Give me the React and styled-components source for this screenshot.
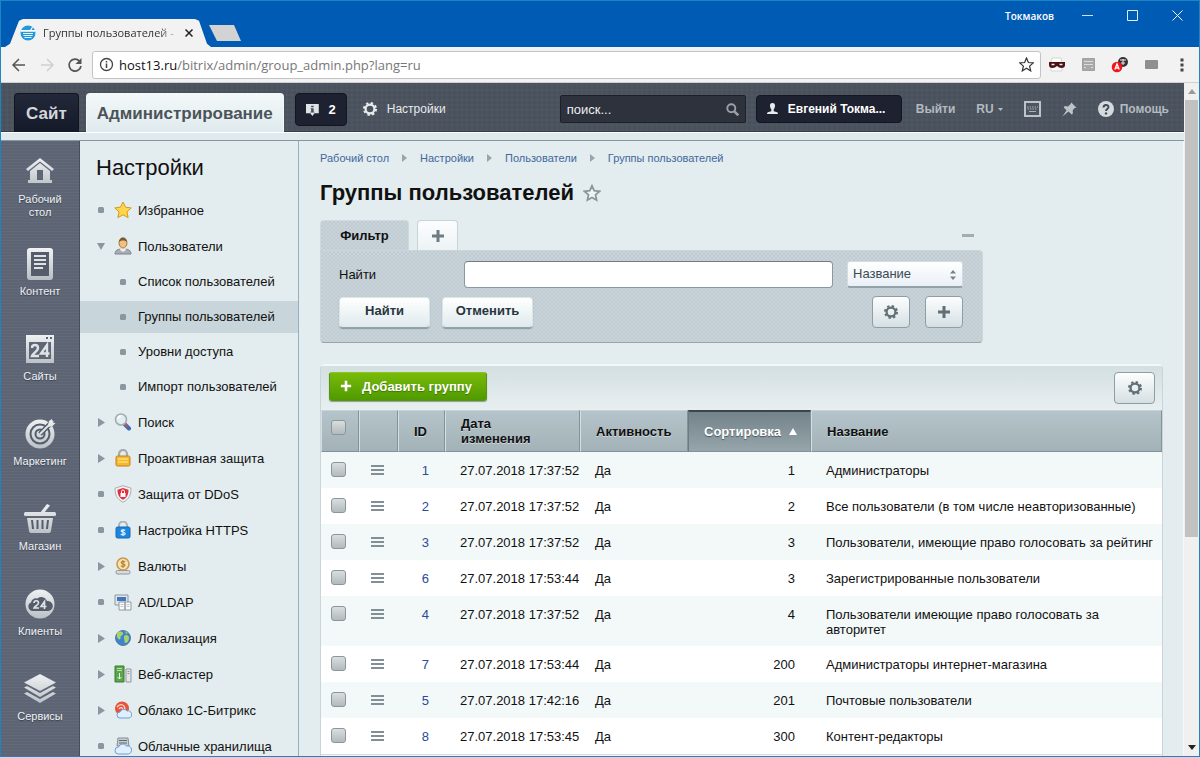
import React from "react";
import styled, { createGlobalStyle, css } from "styled-components";

const Global = createGlobalStyle`
  * { box-sizing: border-box; }
  html, body { margin: 0; height: 100%; }
  #root { height: 100%; }
  body { font-family: "Liberation Sans", Arial, sans-serif; font-size: 13px; color: #111; overflow: hidden; }
  button, input, select { font-family: inherit; }
  ul, ol { list-style: none; margin: 0; padding: 0; }
`;

/* ---------- browser window ---------- */

const Window = styled.div`
  height: 100vh;
  display: flex;
  flex-direction: column;
  border: 1px solid #1a87c4;
  overflow: hidden;
`;

const TitleBar = styled.header`
  flex: none;
  height: 46px;
  display: flex;
  background: #005bb5;
  color: #fff;
`;

const BrowserTab = styled.div`
  align-self: flex-end;
  width: 206px;
  height: 28px;
  margin-left: 4px;
  padding: 0 18px 0 15px;
  display: flex;
  align-items: center;
  background: #f2f2f2;
  clip-path: polygon(0 100%, 5px 88%, 14px 6%, 18px 0, 190px 0, 194px 6%, 202px 88%, 100% 100%);
`;

const TabTitle = styled.span`
  flex: 1;
  margin: 0 8px 0 7px;
  white-space: nowrap;
  font: 11px/16px "Open Sans", sans-serif;
  color: #333;
  mask-image: linear-gradient(90deg, #000 85%, rgba(0,0,0,.2));
`;

const BareButton = styled.button`
  flex: none;
  display: flex;
  align-items: center;
  justify-content: center;
  padding: 0;
  border: 0;
  background: none;
  color: inherit;
`;

const NewTab = styled.button`
  align-self: flex-end;
  width: 32px;
  height: 16px;
  margin: 0 0 6px -2px;
  padding: 0;
  border: 0;
  background: #d3d3d3;
  clip-path: polygon(0 0, 25px 0, 100% 100%, 8px 100%);
`;

const WindowControls = styled.div`
  margin-left: auto;
  height: 29px;
  padding-right: 16px;
  display: flex;
  align-items: center;
  gap: 28px;
  font: 600 10px/16px "Open Sans", sans-serif;
`;

const ControlButtons = styled.div`
  display: flex;
  gap: 34px;
`;

const AddressBar = styled.div`
  flex: none;
  height: 36px;
  display: flex;
  align-items: center;
  padding: 0 9px 0 10px;
  background: #f2f2f2;
  border-bottom: 1px solid #d0d0d0;
  color: #4a4a4a;
`;

const NavButtons = styled.div`
  display: flex;
  gap: 12px;
  margin-right: 9px;
`;

const UrlBox = styled.div`
  flex: 1;
  height: 28px;
  display: flex;
  align-items: center;
  gap: 5px;
  padding: 0 6px;
  border: 1px solid #c4c4c4;
  border-radius: 3px;
  background: #fff;
`;

const Url = styled.span`
  flex: 1;
  font: 13px/20px "Open Sans", sans-serif;
  color: #777;
  white-space: nowrap;
  b { font-weight: 400; color: #111; }
`;

const Extensions = styled.div`
  display: flex;
  align-items: center;
  gap: 16px;
  margin-left: 7px;
`;

const Viewport = styled.div`
  flex: 1;
  min-height: 0;
  display: flex;
`;

const ScrollBar = styled.div`
  flex: none;
  width: 15px;
  display: flex;
  flex-direction: column;
  align-items: center;
  background: #f0f0f0;
`;

const ScrollThumb = styled.div`
  width: 13px;
  flex: 0 0 65%;
  background: #c1c1c1;
`;

const ScrollArrow = styled(BareButton)`
  height: 17px;
  width: 15px;
  color: ${(p) => (p.$muted ? "#9a9a9a" : "#222")};
  margin-top: ${(p) => (p.$end ? "auto" : 0)};
`;

/* ---------- admin header ---------- */

const Admin = styled.div`
  flex: 1;
  min-width: 0;
  display: flex;
  flex-direction: column;
  background: #e3ecee;
`;

const TopBar = styled.nav`
  flex: none;
  height: 49px;
  display: flex;
  align-items: flex-start;
  padding: 10px 15px 0 13px;
  border-bottom: 1px solid #363d46;
  background:
    repeating-linear-gradient(90deg, rgba(255,255,255,.02) 0 2px, transparent 2px 5px),
    repeating-linear-gradient(0deg, rgba(255,255,255,.02) 0 2px, transparent 2px 5px),
    #48515c;
`;

const ModeTab = styled.a`
  height: 39px;
  padding: 0 11px;
  border-radius: 4px 4px 0 0;
  font-size: 17px;
  font-weight: 700;
  line-height: 40px;
  text-decoration: none;
  color: #d3d7db;
  background: linear-gradient(#23283a, #151a29);
  border: 1px solid #12151f;
  border-bottom: 0;
  margin-right: 7px;
  ${(p) => p.$active && css`
    padding: 0 10px;
    border-color: #f3f8f9;
    color: #4c545a;
    background: linear-gradient(#f3f8f9, #dfeaee);
  `}
`;

const DarkButton = styled.button`
  height: ${(p) => (p.$tall ? 33 : 28)}px;
  width: ${(p) => p.$w}px;
  display: flex;
  align-items: center;
  gap: 10px;
  padding: 0 10px;
  border: 1px solid #14161f;
  border-radius: 4px;
  background: #1e2130;
  color: #fff;
  font-size: ${(p) => (p.$tall ? 13 : 12)}px;
  font-weight: 700;
  white-space: nowrap;
`;

const TopLink = styled.a`
  height: 28px;
  display: flex;
  align-items: center;
  gap: ${(p) => p.$gap || 6}px;
  color: ${(p) => (p.$bright ? "#e8ebed" : "#b3bac0")};
  font-size: 12px;
  font-weight: ${(p) => (p.$bright ? 400 : 700)};
  text-decoration: none;
`;

const TopLeft = styled.div`
  display: flex;
  align-items: flex-start;
  gap: 16px;
  margin-left: 4px;
  ${TopLink} { margin-top: 2px; }
`;

const TopRight = styled.div`
  margin: 2px 0 0 auto;
  display: flex;
  align-items: center;
  gap: 10px;
`;

const TopLinks = styled.div`
  display: flex;
  gap: 21px;
  margin-left: 4px;
`;

const SearchBox = styled.label`
  width: 186px;
  height: 28px;
  display: flex;
  align-items: center;
  padding: 0 6px;
  border: 1px solid #1d2026;
  border-radius: 2px;
  background: #2d323c;
  color: #9ba0a6;
`;

const SearchInput = styled.input`
  flex: 1;
  min-width: 0;
  padding: 0;
  border: 0;
  background: none;
  font-size: 13px;
  color: #fff;
  &::placeholder { color: #eef0f2; opacity: 1; }
`;

const Strip = styled.div`
  flex: none;
  height: 9px;
  border-top: 1px solid #fff;
  border-bottom: 1px solid #8a959c;
  background: #dfeaee;
`;

const Body = styled.div`
  flex: 1;
  min-height: 0;
  display: flex;
`;

/* ---------- icon rail ---------- */

const Rail = styled.nav`
  flex: none;
  width: 79px;
  padding-top: 14px;
  overflow: hidden;
  border-right: 1px solid #474e5c;
  background: repeating-linear-gradient(#626979 0 1px, #5d6474 1px 3px);
`;

const RailList = styled.ul`
  display: flex;
  flex-direction: column;
  gap: 28px;
`;

const RailLink = styled.a`
  min-height: 57px;
  display: flex;
  flex-direction: column;
  align-items: center;
  gap: 4px;
  color: #f0f3f5;
  font-size: 11px;
  line-height: 13px;
  text-align: center;
  text-decoration: none;
  text-shadow: 0 1px 1px #3a404c;
`;

const RailLabel = styled.span`
  width: min-content;
`;

/* ---------- tree menu ---------- */

const Side = styled.aside`
  flex: none;
  width: 219px;
  overflow: hidden;
  border-right: 1px solid #92b0c0;
`;

const SideTitle = styled.h2`
  margin: 0;
  padding: 13px 16px 10px;
  font-size: 22px;
  font-weight: 400;
  line-height: 28px;
`;

const MenuLink = styled.a`
  height: ${(p) => (p.$sub ? 35 : 36)}px;
  padding-left: ${(p) => (p.$sub ? 39 : 17)}px;
  display: flex;
  align-items: center;
  color: #111;
  font-size: 13px;
  white-space: nowrap;
  text-decoration: none;
  background: ${(p) => (p.$active ? "linear-gradient(transparent 2px, #c8d5da 2px calc(100% - 1px), transparent calc(100% - 1px))" : "none")};
`;

const Marker = styled.span`
  width: 8px;
  margin-right: ${(p) => (p.$sub ? 11 : 9)}px;
  display: flex;
  justify-content: center;
  flex: none;
`;

const MenuIcon = styled.svg`
  flex: none;
  width: 18px;
  height: 18px;
  margin-right: 6px;
`;

/* ---------- main column ---------- */

const Main = styled.main`
  flex: 1;
  min-width: 0;
  overflow: hidden;
  padding: 9px 20px 0 21px;
  border-right: 1px solid #f4f8f9;
  background: #e3ecee;
`;

const Crumbs = styled.ol`
  display: flex;
  gap: 13px;
  font-size: 11px;
  line-height: 16px;
  li { display: flex; align-items: center; gap: 13px; }
  a { color: #41699c; text-decoration: none; }
`;

const Heading = styled.div`
  display: flex;
  align-items: center;
  gap: 9px;
  margin: 13px 0 13px;
  h1 { margin: 0; font-size: 22px; line-height: 28px; }
`;

const texture = css`
  background: repeating-conic-gradient(#c8d4d9 0 25%, #c0ccd2 0 50%) 0 0 / 4px 4px;
`;

const FilterArea = styled.section`
  margin-right: 180px;
`;

const FilterTabs = styled.div`
  display: flex;
  gap: 8px;
  padding-right: 9px;
`;

const FilterTab = styled.button`
  height: 30px;
  width: 89px;
  padding: 0;
  border: 1px solid #cfdadd;
  border-bottom: 0;
  border-radius: 4px 4px 0 0;
  font-size: 13px;
  font-weight: 700;
  color: #111;
  ${texture}
`;

const AddTab = styled(FilterTab)`
  width: 41px;
  display: flex;
  align-items: center;
  justify-content: center;
  color: #6f7c83;
  border: 1px solid #c9d4d8;
  border-bottom: 0;
  background: linear-gradient(#fcfdfe, #edf3f5);
`;

const Collapse = styled(BareButton)`
  margin-left: auto;
  color: #a2adb2;
`;

const FilterPanel = styled.form`
  padding: 10px 19px 14px 18px;
  border: 1px solid #c9d6da;
  border-bottom-color: #97a4aa;
  border-radius: 0 4px 4px 4px;
  ${texture}
`;

const FilterRow = styled.div`
  display: flex;
  align-items: center;
  gap: ${(p) => p.$gap}px;
  & + & { margin-top: 8px; }
  > label { width: 111px; font-size: 13px; }
`;

const TextField = styled.input`
  flex: 1;
  min-width: 0;
  height: 27px;
  padding: 0 8px;
  border: 1px solid #8b98a1;
  border-top-color: #6f7c86;
  border-radius: 4px;
  background: #fff;
  font-size: 13px;
`;

const SelectWrap = styled.div`
  position: relative;
  width: 116px;
  height: 27px;
  svg { position: absolute; right: 7px; top: 9px; pointer-events: none; }
`;

const Select = styled.select`
  appearance: none;
  width: 100%;
  height: 100%;
  padding: 0 0 2px 5px;
  border: 1px solid #d3dde1;
  border-bottom: 2px solid #93a1a8;
  border-radius: 3px;
  background: linear-gradient(#fff, #e9f0f6);
  font-size: 13px;
  color: #3c4a54;
`;

const Button = styled.button`
  width: 91px;
  height: 31px;
  padding: 0 0 3px;
  border: 1px solid #dce5e8;
  border-bottom-color: #93a1a8;
  border-radius: 4px;
  background: linear-gradient(#fff, #dfeaed);
  box-shadow: 0 1px 1px rgba(80,100,110,.5);
  font-size: 13px;
  font-weight: 700;
  color: #29353c;
`;

const IconButton = styled.button`
  width: ${(p) => (p.$wide ? 41 : 38)}px;
  height: 32px;
  display: flex;
  align-items: center;
  justify-content: center;
  padding: 0;
  border: 1px solid #8f9da4;
  border-radius: 4px;
  background: linear-gradient(#fdfefe, #d5dfe3);
  color: #626f76;
`;

const IconButtons = styled.div`
  display: flex;
  gap: 15px;
  margin-left: auto;
`;

const ListPanel = styled.section`
  margin-top: 21px;
  border: 1px solid #c9d5da;
  border-top: 2px solid #f2f7f8;
  border-radius: 5px 5px 0 0;
`;

const ListTools = styled.div`
  height: 44px;
  display: flex;
  align-items: flex-start;
  justify-content: space-between;
  padding: 6px 7px 0 8px;
  background: linear-gradient(#d3dfe2, #e8eff1);
`;

const AddButton = styled.button`
  height: 29px;
  width: 158px;
  display: flex;
  align-items: center;
  gap: 10px;
  padding: 0 0 1px 10px;
  border: 1px solid #58940d;
  border-top-color: #8ac41d;
  border-radius: 3px;
  background: linear-gradient(#79bb0a, #4f9a00);
  box-shadow: 0 1px 1px rgba(60,80,60,.5);
  color: #fff;
  font-size: 13px;
  font-weight: 700;
  white-space: nowrap;
  text-shadow: 0 1px 1px #3c7400;
`;

const Table = styled.table`
  width: 100%;
  table-layout: fixed;
  border-collapse: separate;
  border-spacing: 0;
  font-size: 13px;
  line-height: 15px;
`;

const Th = styled.th`
  height: 42px;
  padding: ${(p) => (p.$check ? "0 0 8px 9px" : "0 4px 0 15px")};
  text-align: left;
  border-top: 1px solid #c5d2d7;
  border-bottom: 1px solid #82929a;
  border-right: 1px solid #83939a;
  border-left: 1px solid #d5dfe2;
  background: linear-gradient(#b4c4ca, #a3b2b7);
  text-shadow: 0 1px 0 #cfdade;
  ${(p) => p.$sorted && css`
    color: #fff;
    border-top: 2px solid #3b454d;
    border-left-color: #6c7a82;
    background: linear-gradient(#74838a, #96a5aa);
    text-shadow: 0 1px 1px #48545b;
  `}
`;

const SortLink = styled.span`
  display: flex;
  align-items: center;
  gap: 8px;
`;

const Td = styled.td`
  height: 36px;
  padding: 11px ${(p) => (p.$align ? 16 : p.$wrap ? 8 : 0)}px 9px ${(p) => (p.$align ? 0 : 15)}px;
  vertical-align: top;
  text-align: ${(p) => p.$align || "left"};
  white-space: ${(p) => (p.$wrap ? "normal" : "nowrap")};
  a { color: #2b4a9b; text-decoration: none; }
`;

const Row = styled.tr`
  background: ${(p) => (p.$odd ? "#f3f8f8" : "#fff")};
`;

const CheckCell = styled(Td)` padding: 10px 0 0 10px; `;
const MenuCell = styled(Td)` padding: 13px 0 0 12px; `;

const Check = styled.input`
  appearance: none;
  display: block;
  width: 15px;
  height: 15px;
  margin: 0;
  border: 1px solid #8b969b;
  border-radius: 3px;
  background: linear-gradient(#d9dede, #b3babd);
`;

const TableEnd = styled.div`
  height: 40px;
  border-top: 1px solid #d5dde0;
  background: #f4f7f8;
`;

/* ---------- icons ---------- */

const Gear = ({ size = 14 }) => (
  <svg width={size} height={size} viewBox="0 0 14 14" fill="none" stroke="currentColor">
    <circle cx="7" cy="7" r="4.4" strokeWidth="2.2" />
    <circle cx="7" cy="7" r="6" strokeWidth="2" strokeDasharray="2.36 2.352" />
  </svg>
);

const Plus = ({ size = 14, thick = 3 }) => (
  <svg width={size} height={size} viewBox="0 0 14 14" stroke="currentColor" strokeWidth={thick}>
    <path d="M7 1v12M1 7h12" />
  </svg>
);

const Lines = () => (
  <svg width="13" height="11" viewBox="0 0 13 11" fill="#838f96">
    <path d="M0 0h13v2H0zM0 4h13v2H0zM0 8h13v2H0z" />
  </svg>
);

const CrumbArrow = () => (
  <svg width="5" height="8" viewBox="0 0 5 8"><path d="M0 0l5 4-5 4z" fill="#98a5ab" /></svg>
);

const TopIcons = {
  notice: (
    <svg width="15" height="15" viewBox="0 0 15 15"><path d="M0 1h15v11h-5l-2.500 3L5 12H0z" fill="#dfe4e6" /><path d="M6 3h3v2H6zM5.500 6H9v4h1v1H5v-1h1V7h-.5z" fill="#4b515c" /></svg>
  ),
  search: (
    <svg width="13" height="13" viewBox="0 0 13 13" fill="none" stroke="currentColor"><circle cx="5.300" cy="5.300" r="4" strokeWidth="1.900" /><path d="M8.300 8.300l4 4" strokeWidth="2.600" /></svg>
  ),
  user: (
    <svg width="11" height="12" viewBox="0 0 11 12" fill="#e8ebee"><path d="M5.500 0C3.700 0 2.800 1.300 3 3c.1 1.600.8 2.700 1.300 3.300v1.900L.8 9.200Q0 9.800 0 11h11q0-1.200-.8-1.800L6.700 8.200V6.300C7.300 5.700 7.900 4.600 8 3c.2-1.700-.7-3-2.500-3z" /></svg>
  ),
  caret: (<svg width="5" height="3" viewBox="0 0 5 3"><path d="M0 0h5L2.500 3z" fill="currentColor" /></svg>),
  keyboard: (
    <svg width="17" height="16" viewBox="0 0 17 16"><path d="M1 1h15v14H1z" fill="#4c5560" stroke="#bcc4ca" strokeWidth="2" /><path d="M3 6h11M3.500 8h10" stroke="#aab2b8" strokeDasharray="1.500 1" /><path d="M5 10.500h7" stroke="#aab2b8" /></svg>
  ),
  pin: (
    <svg width="15" height="15" viewBox="0 0 15 15" fill="#bcc4ca"><path d="M9.300 0.500l5.200 5.200-1.800.4-2 2.200.2 3.200-1.300 1-3.100-3L.5 14.500l4-6.200-2.800-2.900 1-1.300 3.300.3 2.400-2.100z" /></svg>
  ),
  help: (
    <svg width="16" height="16" viewBox="0 0 16 16"><circle cx="8" cy="8" r="8" fill="#d4dadd" /><path d="M5.500 6.400c0-3.200 5-3.200 5-.3C10.500 8 8 7.900 8 10" fill="none" stroke="#414954" strokeWidth="1.900" /><circle cx="8" cy="12.400" r="1.200" fill="#414954" /></svg>
  ),
};

const railShapes = {
  home: (<><path d="M3 14L17 3l14 11-2 2L17 6.500 5 16z" /><path fillRule="evenodd" d="M7 16l10-8 10 8v9h2v3H5v-3h2zM14 15v10h6V15z" /></>),
  doc: (<><rect x="4" y="1" width="26" height="32" rx="3" /><path d="M8 5h18v24H8z" fill="#555d6b" /><path d="M11 9h12M11 13h12M11 17h12M11 21h9" stroke="#dfe3e5" strokeWidth="1.800" /></>),
  sites: (<><path fillRule="evenodd" d="M3 3h28v28H3zM6 10v17h22V10zM23 5v2h2V5zM27 5v2h2V5z" /><path d="M9 16c0-4 6-4 6 0 0 3-5 5-6 8h7" fill="none" stroke="#dfe3e5" strokeWidth="2.400" /><path d="M24 25V13l-6 8.500h8.500" fill="none" stroke="#dfe3e5" strokeWidth="2.400" /></>),
  target: (<><circle cx="17" cy="17" r="14.500" /><circle cx="17" cy="17" r="9.500" fill="none" stroke="#555d6b" strokeWidth="2" /><circle cx="17" cy="17" r="4.500" fill="none" stroke="#555d6b" strokeWidth="2" /><path d="M17 17L29 5" stroke="#555d6b" strokeWidth="5" /><path d="M17 17L30 4" stroke="#dfe3e5" strokeWidth="2" /><path d="M25 8l1-4 3-2 .5 3.500 3 .5-3 3-4 1z" /></>),
  basket: (<><path d="M17 11L24 2l3 1.500L21 11z" /><rect x="1" y="10" width="32" height="4" rx="1.500" /><path d="M4 16h26l-2 13q-.3 2-2 2H8q-1.700 0-2-2z" /><path d="M9 18l1 9M14.500 18v9M19.500 18v9M25 18l-1 9" stroke="#555d6b" strokeWidth="2" /></>),
  cloud: (<><circle cx="17" cy="17" r="14.500" /><path d="M9 24a4.500 4.500 0 0 1-1-8.500 5 5 0 0 1 6.500-4A6 6 0 0 1 24 14a5 5 0 0 1 1.500 10z" fill="#555d6b" /><path d="M11 16c0-3 4.500-3 4.500 0 0 2-3.500 3-4.500 5h5M21.500 22v-7.500L18 19.500h5.500" fill="none" stroke="#dfe3e5" strokeWidth="1.600" /></>),
  layers: (<><path d="M17 2l16 8.500L17 19 1 10.500z" /><path d="M1 15.500l3-1.500 13 7 13-7 3 1.500L17 25z" /><path d="M1 21.500l3-1.500 13 7 13-7 3 1.500L17 31z" /></>),
};

const RailIcon = ({ name }) => (
  <svg width="34" height="34" viewBox="0 0 34 34" fill={`url(#g-${name})`}>
    <defs><linearGradient id={`g-${name}`} x1="0" y1="0" x2="0" y2="34" gradientUnits="userSpaceOnUse"><stop stopColor="#f3f5f6" /><stop offset="1" stopColor="#b6bdc2" /></linearGradient></defs>
    {railShapes[name]}
  </svg>
);

const menuShapes = {
  star: (<path d="M9 1l2.500 5.200 5.700.7-4.200 4 1.100 5.700L9 13.800l-5.100 2.800L5 10.900l-4.200-4 5.700-.7z" fill="#fdd64b" stroke="#d79a1b" />),
  user: (<><path d="M1 17c0-4 3-5 8-5s8 1 8 5z" fill="#a7adb3" stroke="#7d848a" /><path d="M7 10h4l1 3-3 2-3-2z" fill="#eee" /><ellipse cx="9" cy="6" rx="4" ry="5" fill="#f0c07f" stroke="#a9783f" /><path d="M5 5c0-6 8-6 8 0-2-2-6-2-8 0z" fill="#7b5a3a" /></>),
  search: (<><path d="M10.500 11l4.500 4.500" stroke="#4368b5" strokeWidth="4" strokeLinecap="round" /><path d="M10.500 10.500l3 3" stroke="#c75743" strokeWidth="2" /><circle cx="7" cy="6.500" r="5.500" fill="#e4edf3" stroke="#a2acb3" strokeWidth="1.600" /><path d="M4 6a3 3 0 0 1 3-3" stroke="#fff" strokeWidth="1.500" fill="none" /></>),
  lock: (<><path d="M5 8V5a4 4 0 0 1 8 0v3" fill="none" stroke="#a6aaad" strokeWidth="2.200" /><rect x="2" y="7" width="14" height="10" rx="1.500" fill="#f5b82e" stroke="#bf8115" /><path d="M4 10h10M4 13h10" stroke="#ffdc74" strokeWidth="1.500" /></>),
  shield: (<><path d="M9 .7l8 2.500c0 7-2 11-8 14-6-3-8-7-8-14z" fill="#f2f3f4" stroke="#a7afb4" /><path d="M9 3l5.500 1.700c0 5-1.500 7.800-5.500 10-4-2.200-5.500-5-5.500-10z" fill="#e0303d" /><path d="M7.500 8V6.500a1.500 1.500 0 0 1 3 0V8" stroke="#fff" fill="none" /><rect x="6.500" y="8" width="5" height="4" fill="#fff" /></>),
  https: (<><path d="M5 8V4.500a4 4 0 0 1 8 0V8" fill="none" stroke="#aab3b9" strokeWidth="2" /><rect x="2" y="6" width="14" height="11" rx="1.500" fill="#1c86df" stroke="#1469b5" /><path d="M11.200 9.500c-1-1-4-1-4 .5 0 1.600 4 1 4 2.700 0 1.500-3.200 1.500-4.400.3M9 8v7" stroke="#d9efff" fill="none" strokeWidth="1.200" /></>),
  coin: (<><rect x="2" y="13.500" width="14" height="3.500" rx="1.500" fill="#d9dcdd" stroke="#8d979d" /><circle cx="9" cy="7" r="6" fill="#f7e2b6" stroke="#c99a4c" strokeWidth="1.600" /><path d="M11.200 5c-1-1-4-1-4 .5C7.200 7.200 11 6.500 11 8.300c0 1.500-3.200 1.500-4.200.3M9 3v8" stroke="#b98335" fill="none" strokeWidth="1.200" /></>),
  ldap: (<><path d="M1 2h13v10H1z" fill="#dfe5ea" stroke="#8d98a1" /><path d="M3 4h9v4H3z" fill="#3f79bd" /><path d="M5 9h6v8H5zM11 9h6v8h-6z" fill="#fafafa" stroke="#8d98a1" /><path d="M6.500 11.500h3M6.500 13.500h3M12.500 11.500h3M12.500 13.500h3" stroke="#c1c7cc" /></>),
  globe: (<><circle cx="9" cy="9" r="7.500" fill="#3f83cd" stroke="#5a7b9c" /><path d="M3 4c3-3 7-1 6 1S6 7 6.500 9 4 11 3 8zM10 7c2-2 5-1 5 2s-2 5-3.500 5-.5-3-1.500-4zM11 2l3 2-2 1z" fill="#a6d36e" /></>),
  cluster: (<><path d="M1 1h9v16H1z" fill="#5ba64c" stroke="#3a7c30" /><path d="M3 3.500h5M3 5.500h5" stroke="#b9e0ae" /><path d="M5.500 8v6M3.500 12l2 2 2-2" stroke="#e9f6e5" fill="none" /><path d="M12 4h5v13h-5z" fill="#e3e6e8" stroke="#9099a0" /><path d="M13.500 6.500h2M13.500 8.500h2" stroke="#9099a0" /></>),
  bxcloud: (<><circle cx="8" cy="7.500" r="7" fill="#e4553c" /><path d="M3 6c3-4 8-3 8 3M5 8c1-2 4-2 4 1" stroke="#ffd9cf" fill="none" strokeWidth="1.300" /><path d="M6 17a3 3 0 0 1 0-6 4 4 0 0 1 7-1 3.600 3.600 0 0 1 2 7z" fill="#dfefff" stroke="#6f9dd0" /></>),
  storage: (<><path d="M4 1h10l1 8H3z" fill="#c9ced2" stroke="#838d94" /><path d="M5 3.500h8M5 6h8" stroke="#5d676e" /><path d="M4.500 17a3.500 3.500 0 0 1 0-7 4.500 4.500 0 0 1 8-1 4 4 0 0 1 2 8z" fill="#dfefff" stroke="#6f9dd0" /></>),
};

const markers = {
  dot: (<svg width="6" height="6" viewBox="0 0 6 6"><rect width="6" height="6" rx="1.500" fill="#8997a1" /></svg>),
  right: (<svg width="7" height="9" viewBox="0 0 7 9"><path d="M0 0l7 4.500L0 9z" fill="#8997a1" /></svg>),
  down: (<svg width="8" height="7" viewBox="0 0 8 7"><path d="M0 0h8L4 7z" fill="#8997a1" /></svg>),
};

/* ---------- data ---------- */

const rail = [
  ["home", "Рабочий стол"], ["doc", "Контент"], ["sites", "Сайты"], ["target", "Маркетинг"],
  ["basket", "Магазин"], ["cloud", "Клиенты"], ["layers", "Сервисы"],
];

const menu = [
  { t: "Избранное", m: "dot", i: "star" },
  { t: "Пользователи", m: "down", i: "user", sub: ["Список пользователей", "Группы пользователей", "Уровни доступа", "Импорт пользователей"] },
  { t: "Поиск", m: "right", i: "search" },
  { t: "Проактивная защита", m: "right", i: "lock" },
  { t: "Защита от DDoS", m: "dot", i: "shield" },
  { t: "Настройка HTTPS", m: "dot", i: "https" },
  { t: "Валюты", m: "right", i: "coin" },
  { t: "AD/LDAP", m: "dot", i: "ldap" },
  { t: "Локализация", m: "right", i: "globe" },
  { t: "Веб-кластер", m: "right", i: "cluster" },
  { t: "Облако 1С-Битрикс", m: "right", i: "bxcloud" },
  { t: "Облачные хранилища", m: "dot", i: "storage" },
];

const crumbs = ["Рабочий стол", "Настройки", "Пользователи", "Группы пользователей"];

const rows = [
  [1, "27.07.2018 17:37:52", 1, "Администраторы"],
  [2, "27.07.2018 17:37:52", 2, "Все пользователи (в том числе неавторизованные)"],
  [3, "27.07.2018 17:37:52", 3, "Пользователи, имеющие право голосовать за рейтинг"],
  [6, "27.07.2018 17:53:44", 3, "Зарегистрированные пользователи"],
  [4, "27.07.2018 17:37:52", 4, "Пользователи имеющие право голосовать за авторитет"],
  [7, "27.07.2018 17:53:44", 200, "Администраторы интернет-магазина"],
  [5, "27.07.2018 17:42:16", 201, "Почтовые пользователи"],
  [8, "27.07.2018 17:53:45", 300, "Контент-редакторы"],
];

/* ---------- parts ---------- */

function Chrome() {
  return (
    <>
      <TitleBar>
        <BrowserTab>
          <svg width="16" height="16" viewBox="0 0 16 16"><circle cx="8" cy="8" r="7.500" fill="#2398dd" /><path d="M1 5h9l2-3 1 .6L11.500 5H15v1.800H1z" fill="#fff" /><path d="M3 8.500h10M3.500 10.500h9M4.500 12.500h7" stroke="#e9f6ff" strokeWidth="1.200" /></svg>
          <TabTitle>Группы пользователей -</TabTitle>
          <BareButton aria-label="Закрыть вкладку"><svg width="8" height="8" viewBox="0 0 8 8" stroke="#222" strokeWidth="1.500"><path d="M.5.5l7 7M7.500.5l-7 7" /></svg></BareButton>
        </BrowserTab>
        <NewTab aria-label="Новая вкладка" />
        <WindowControls>
          <span>Токмаков</span>
          <ControlButtons>
            <BareButton aria-label="Свернуть"><svg width="11" height="11" viewBox="0 0 11 11" stroke="#cfe0f2"><path d="M0 5.500h11" /></svg></BareButton>
            <BareButton aria-label="Развернуть"><svg width="11" height="11" viewBox="0 0 11 11" stroke="#e3edf7" fill="none"><path d="M.5.5h10v10H.5z" /></svg></BareButton>
            <BareButton aria-label="Закрыть"><svg width="11" height="11" viewBox="0 0 11 11" stroke="#fff"><path d="M.5.5l10 10M10.500.5l-10 10" /></svg></BareButton>
          </ControlButtons>
        </WindowControls>
      </TitleBar>
      <AddressBar>
        <NavButtons>
          <BareButton aria-label="Назад"><svg width="16" height="16" viewBox="0 0 16 16" fill="none" stroke="#555" strokeWidth="1.500"><path d="M14 8H2M8 2L2 8l6 6" /></svg></BareButton>
          <BareButton aria-label="Вперёд"><svg width="16" height="16" viewBox="0 0 16 16" fill="none" stroke="#cfcfcf" strokeWidth="1.500"><path d="M2 8h12M8 2l6 6-6 6" /></svg></BareButton>
          <BareButton aria-label="Обновить"><svg width="16" height="16" viewBox="0 0 16 16" fill="none" stroke="#555" strokeWidth="1.700"><path d="M12.500 4A6 6 0 1 0 14 9" /><path d="M14.500 1v6h-6z" fill="#555" stroke="none" /></svg></BareButton>
        </NavButtons>
        <UrlBox>
          <svg width="15" height="15" viewBox="0 0 15 15" fill="none" stroke="#444"><circle cx="7.500" cy="7.500" r="6" strokeWidth="1.300" /><path d="M7.500 6.500v4.500M7.500 4v1.500" strokeWidth="1.500" /></svg>
          <Url><b>host13.ru</b>/bitrix/admin/group_admin.php?lang=ru</Url>
          <svg width="15" height="15" viewBox="0 0 15 15" fill="none" stroke="#333" strokeWidth="1.200"><path d="M7.500 1l1.900 4.500 4.900.4-3.700 3.200 1.100 4.800-4.200-2.600-4.200 2.600 1.100-4.800L.7 5.900l4.900-.4z" /></svg>
        </UrlBox>
        <Extensions>
          <svg width="18" height="16" viewBox="0 0 18 16"><path d="M3 5l1-4h9l1 4v9H3z" fill="#fdfdfd" stroke="#d5d5d5" /><path d="M1 5h16v3q0 3-3.500 3c-2 0-3-1-4.500-2-1.500 1-2.500 2-4.500 2Q1 11 1 8z" fill="#4b1216" /><path d="M3.500 7.500h3M11.500 7.500h3" stroke="#eee" strokeWidth="1.600" /></svg>
          <svg width="13" height="13" viewBox="0 0 13 13"><path d="M.5.5h12v12H.5z" fill="#a9a9a9" stroke="#a0a0a0" /><path d="M2 3.500h9M2 6.500h9M2 9.500h2M9 9.500h2" stroke="#dcdcdc" /></svg>
          <svg width="18" height="17" viewBox="0 0 18 17"><circle cx="12" cy="6" r="5" fill="#333" /><path d="M9 4h6M10 7h4M12 3v6" stroke="#eee" /><circle cx="6" cy="11" r="5.300" fill="#f3151b" /><path d="M3.800 13.500L6 8l2.200 5.500M4.600 12h2.800" fill="none" stroke="#fff" strokeWidth="1.300" /></svg>
          <svg width="13" height="10" viewBox="0 0 13 10"><rect width="13" height="9" rx="1" fill="#8f8f8f" /></svg>
          <svg width="16" height="14" viewBox="0 0 16 14" fill="#444"><path d="M6.500 0.500h3v3h-3zM6.500 5.500h3v3h-3zM6.500 10.500h3v3h-3z" /></svg>
        </Extensions>
      </AddressBar>
    </>
  );
}

function AdminHeader() {
  return (
    <>
      <TopBar>
        <ModeTab href="#site">Сайт</ModeTab>
        <ModeTab href="#admin" $active>Администрирование</ModeTab>
        <TopLeft>
          <DarkButton $tall $w={52}>{TopIcons.notice}2</DarkButton>
          <TopLink href="#settings" $bright $gap={10}><Gear />Настройки</TopLink>
        </TopLeft>
        <TopRight>
          <SearchBox><SearchInput placeholder="поиск..." aria-label="Поиск" />{TopIcons.search}</SearchBox>
          <DarkButton $w={146}>{TopIcons.user}Евгений Токма...</DarkButton>
          <TopLinks>
            <TopLink href="#exit">Выйти</TopLink>
            <TopLink href="#lang" $gap={4}>RU {TopIcons.caret}</TopLink>
            <TopLink href="#keys" aria-label="Горячие клавиши">{TopIcons.keyboard}</TopLink>
            <TopLink href="#pin" aria-label="Закрепить">{TopIcons.pin}</TopLink>
            <TopLink href="#help">{TopIcons.help}Помощь</TopLink>
          </TopLinks>
        </TopRight>
      </TopBar>
      <Strip />
    </>
  );
}

function SideMenu() {
  return (
    <Side>
      <SideTitle>Настройки</SideTitle>
      <ul>
        {menu.map((it) => (
          <li key={it.t}>
            <MenuLink href="#menu">
              <Marker>{markers[it.m]}</Marker>
              <MenuIcon viewBox="0 0 18 18">{menuShapes[it.i]}</MenuIcon>
              {it.t}
            </MenuLink>
            {it.sub && (
              <ul>
                {it.sub.map((s, i) => (
                  <li key={s}><MenuLink href="#menu" $sub $active={i === 1}><Marker $sub>{markers.dot}</Marker>{s}</MenuLink></li>
                ))}
              </ul>
            )}
          </li>
        ))}
      </ul>
    </Side>
  );
}

function Filter() {
  return (
    <FilterArea>
      <FilterTabs>
        <FilterTab>Фильтр</FilterTab>
        <AddTab aria-label="Добавить фильтр"><Plus /></AddTab>
        <Collapse aria-label="Свернуть фильтр"><svg width="12" height="3" viewBox="0 0 12 3"><path d="M0 0h12v3H0z" fill="currentColor" /></svg></Collapse>
      </FilterTabs>
      <FilterPanel onSubmit={(e) => e.preventDefault()}>
        <FilterRow $gap={14}>
          <label htmlFor="find">Найти</label>
          <TextField id="find" type="text" />
          <SelectWrap>
            <Select aria-label="Поле поиска" defaultValue="name"><option value="name">Название</option></Select>
            <svg width="6" height="10" viewBox="0 0 6 10" fill="#75828a"><path d="M0 3.500h6L3 0zM0 6.500h6L3 10z" /></svg>
          </SelectWrap>
        </FilterRow>
        <FilterRow $gap={12}>
          <Button>Найти</Button>
          <Button type="reset">Отменить</Button>
          <IconButtons>
            <IconButton type="button" aria-label="Настройка фильтра"><Gear /></IconButton>
            <IconButton type="button" aria-label="Добавить условие"><Plus /></IconButton>
          </IconButtons>
        </FilterRow>
      </FilterPanel>
    </FilterArea>
  );
}

function GroupList() {
  return (
    <ListPanel>
      <ListTools>
        <AddButton><Plus size={12} />Добавить группу</AddButton>
        <IconButton $wide aria-label="Настройка списка"><Gear /></IconButton>
      </ListTools>
      <Table>
        <colgroup>
          <col width="38" /><col width="39" /><col width="47" /><col width="135" /><col width="108" /><col width="123" /><col />
        </colgroup>
        <thead>
          <tr>
            <Th $check><Check type="checkbox" aria-label="Выбрать все" /></Th>
            <Th aria-label="Действия" />
            <Th>ID</Th>
            <Th>Дата<br />изменения</Th>
            <Th>Активность</Th>
            <Th $sorted><SortLink>Сортировка<svg width="8" height="7" viewBox="0 0 8 7"><path d="M4 0l4 7H0z" fill="#fff" /></svg></SortLink></Th>
            <Th>Название</Th>
          </tr>
        </thead>
        <tbody>
          {rows.map(([id, date, sort, name], i) => (
            <Row key={id} $odd={i % 2 === 0}>
              <CheckCell><Check type="checkbox" aria-label={name} /></CheckCell>
              <MenuCell><BareButton aria-label="Действия"><Lines /></BareButton></MenuCell>
              <Td $align="right"><a href="#group">{id}</a></Td>
              <Td>{date}</Td>
              <Td>Да</Td>
              <Td $align="right">{sort}</Td>
              <Td $wrap>{name}</Td>
            </Row>
          ))}
        </tbody>
      </Table>
      <TableEnd />
    </ListPanel>
  );
}

export default function App() {
  return (
    <Window>
      <Global />
      <Chrome />
      <Viewport>
        <Admin>
          <AdminHeader />
          <Body>
            <Rail>
              <RailList>
                {rail.map(([icon, label]) => (
                  <li key={icon}><RailLink href="#section"><RailIcon name={icon} /><RailLabel>{label}</RailLabel></RailLink></li>
                ))}
              </RailList>
            </Rail>
            <SideMenu />
            <Main>
              <Crumbs>
                {crumbs.map((c, i) => (
                  <li key={c}><a href="#crumb">{c}</a>{i < 3 && <CrumbArrow />}</li>
                ))}
              </Crumbs>
              <Heading>
                <h1>Группы пользователей</h1>
                <svg width="18" height="18" viewBox="0 0 18 18" fill="#eef3f5" stroke="#8a979f" strokeWidth="1.800"><path d="M9 1.800l2.200 4.900 5.300.6-4 3.600 1.100 5.200L9 13.500l-4.600 2.600 1.100-5.200-4-3.600 5.300-.6z" /></svg>
              </Heading>
              <Filter />
              <GroupList />
            </Main>
          </Body>
        </Admin>
        <ScrollBar>
          <ScrollArrow $muted aria-label="Вверх"><svg width="8" height="5" viewBox="0 0 8 5"><path d="M0 5h8L4 0z" fill="currentColor" /></svg></ScrollArrow>
          <ScrollThumb />
          <ScrollArrow $end aria-label="Вниз"><svg width="8" height="5" viewBox="0 0 8 5"><path d="M0 0h8L4 5z" fill="currentColor" /></svg></ScrollArrow>
        </ScrollBar>
      </Viewport>
    </Window>
  );
}
